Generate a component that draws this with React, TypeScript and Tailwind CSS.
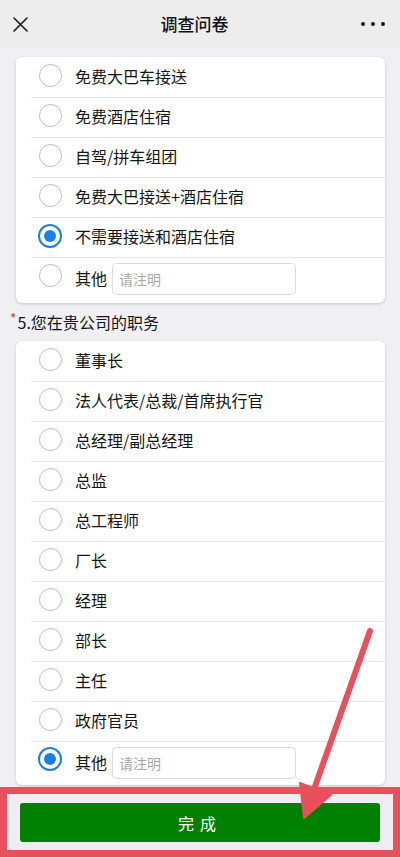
import React from "react";

const font = { fontFamily: '"Noto Sans CJK SC", "Noto Sans", sans-serif' };

function Radio({ checked }: { checked?: boolean }) {
  if (checked) {
    return (
      <span className="ml-[7px] mr-[13px] flex h-[24px] w-[24px] shrink-0 items-center justify-center rounded-full border-[2.5px] border-[#1a7fe8] bg-white">
        <span className="h-[12px] w-[12px] rounded-full bg-[#1a7fe8]" />
      </span>
    );
  }
  return (
    <span className="ml-[8px] mr-[13px] h-[23px] w-[23px] shrink-0 rounded-full border border-[#bdbdbd] bg-white" />
  );
}

function Row({ label, checked, first }: { label: string; checked?: boolean; first?: boolean }) {
  return (
    <div
      className={
        "ml-[15px] flex h-[40px] items-center pb-[3px] " +
        (first ? "" : "border-t border-[#e6e6e6]")
      }
    >
      <span className="mb-[1px] flex">
        <Radio checked={checked} />
      </span>
      <span className="text-[16px] leading-none text-[#141414]">{label}</span>
    </div>
  );
}

function OtherRow({ checked, h }: { checked?: boolean; h: string }) {
  return (
    <div className={"ml-[15px] flex items-start border-t border-[#e6e6e6] pt-[5px] " + h}>
      <div className="flex h-[24px] items-center">
        <Radio checked={checked} />
      </div>
      <div className="flex h-[30px] items-center">
        <span className="text-[16px] leading-none text-[#141414]">其他</span>
      </div>
      <div className="ml-[5px] flex h-[32px] w-[184px] items-center rounded-[4px] border border-[#dcdcdc] bg-white pl-[6px]">
        <span className="text-[14px] leading-none text-[#a8a8a8]">请注明</span>
      </div>
    </div>
  );
}

export default function App() {
  const opts1 = ["免费大巴车接送", "免费酒店住宿", "自驾/拼车组团", "免费大巴接送+酒店住宿"];
  const opts2 = [
    "董事长",
    "法人代表/总裁/首席执行官",
    "总经理/副总经理",
    "总监",
    "总工程师",
    "厂长",
    "经理",
    "部长",
    "主任",
    "政府官员",
  ];
  return (
    <div className="relative h-[857px] w-[400px] overflow-hidden bg-[#efeff4]" style={font}>
      {/* header */}
      <div className="flex h-[48px] items-center justify-between bg-[#ededed] px-[13px]">
        <svg width="15" height="15" viewBox="0 0 15 15" className="mt-[1px]">
          <path d="M1 1 L14 14 M14 1 L1 14" stroke="#1a1a1a" strokeWidth="1.6" strokeLinecap="round" />
        </svg>
        <span className="text-[17px] font-medium text-[#111]">调查问卷</span>
        <div className="mr-[2px] flex gap-[6px]">
          <span className="h-[4px] w-[4px] rounded-full bg-[#111]" />
          <span className="h-[4px] w-[4px] rounded-full bg-[#111]" />
          <span className="h-[4px] w-[4px] rounded-full bg-[#111]" />
        </div>
      </div>

      {/* card 1 */}
      <div className="mx-[16px] mt-[9px] w-[369px] rounded-[6px] bg-white shadow-[0_1px_3px_rgba(0,0,0,0.18)]">
        {opts1.map((o, i) => (
          <Row key={o} label={o} first={i === 0} />
        ))}
        <Row label="不需要接送和酒店住宿" checked />
        <OtherRow h="h-[46px]" />
      </div>

      {/* question */}
      <div className="flex h-[38px] items-center pl-[10px]">
        <span className="mr-[1px] self-start pt-[8px] text-[14px] leading-none text-[#e53935]">*</span>
        <span className="text-[16px] leading-none text-[#141414]">5.您在贵公司的职务</span>
      </div>

      {/* card 2 */}
      <div className="mx-[16px] w-[369px] rounded-[6px] bg-white shadow-[0_1px_3px_rgba(0,0,0,0.18)]">
        {opts2.map((o, i) => (
          <Row key={o} label={o} first={i === 0} />
        ))}
        <OtherRow checked h="h-[44px]" />
      </div>

      {/* footer with annotation frame */}
      <div className="mt-[2px] h-[70px] border-[7px] border-[#e8505b] bg-[#ededf2] px-[13px] pt-[9px]">
        <div className="flex h-[39px] items-center justify-center rounded-[3px] bg-[#008000]">
          <span className="text-[16px] tracking-[6px] text-white">完成</span>
        </div>
      </div>

      {/* annotation arrow */}
      <svg className="pointer-events-none absolute left-0 top-0" width="400" height="857" viewBox="0 0 400 857">
        <line x1="370" y1="631" x2="312" y2="795" stroke="#e8505b" strokeWidth="6" strokeLinecap="round" />
        <polygon points="304,818 300,783 331,795" fill="#e8505b" stroke="#e8505b" strokeWidth="2" strokeLinejoin="round" />
      </svg>
    </div>
  );
}
